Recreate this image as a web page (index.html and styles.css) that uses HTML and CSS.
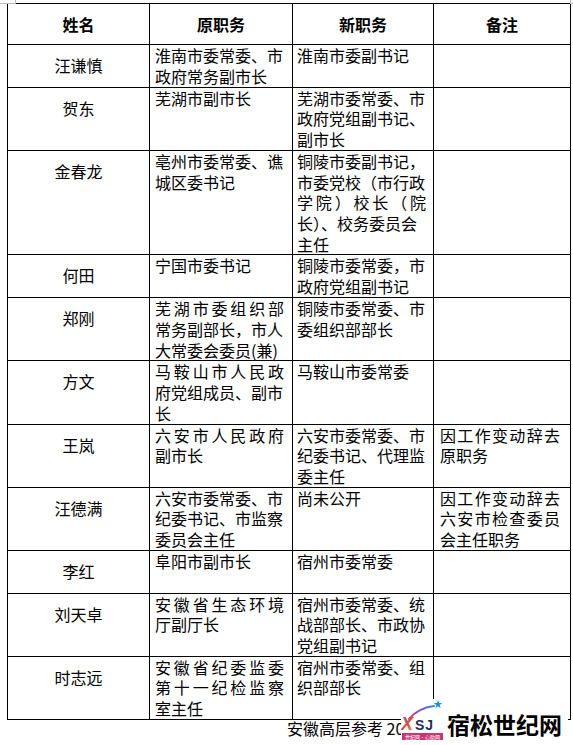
FILE: index.html
```html
<!DOCTYPE html>
<html lang="zh-CN">
<head>
<meta charset="utf-8">
<title>安徽干部调整</title>
<link rel="stylesheet" href="styles.css">
</head>
<body>
<div class="mark mark-tl"></div>
<div class="mark mark-tr"></div>
<main class="page">
  <table class="roster">
    <colgroup><col class="c1"><col class="c2"><col class="c3"><col class="c4"></colgroup>
    <thead>
      <tr><th>姓名</th><th>原职务</th><th>新职务</th><th>备注</th></tr>
    </thead>
    <tbody>
      <tr>
        <td class="name">汪谦慎</td>
        <td class="old"><span class="ln">淮南市委常委、市</span><span class="ln">政府常务副市长</span></td>
        <td class="new"><span class="ln">淮南市委副书记</span></td>
        <td class="note"></td>
      </tr>
      <tr>
        <td class="name">贺东</td>
        <td class="old"><span class="ln">芜湖市副市长</span></td>
        <td class="new"><span class="ln">芜湖市委常委、市</span><span class="ln">政府党组副书记、</span><span class="ln">副市长</span></td>
        <td class="note"></td>
      </tr>
      <tr>
        <td class="name">金春龙</td>
        <td class="old"><span class="ln">亳州市委常委、谯</span><span class="ln">城区委书记</span></td>
        <td class="new"><span class="ln">铜陵市委副书记，</span><span class="ln">市委党校（市行政</span><span class="ln sp">学院）校长（院</span><span class="ln">长）、校务委员会</span><span class="ln">主任</span></td>
        <td class="note"></td>
      </tr>
      <tr>
        <td class="name">何田</td>
        <td class="old"><span class="ln">宁国市委书记</span></td>
        <td class="new"><span class="ln">铜陵市委常委，市</span><span class="ln">政府党组副书记</span></td>
        <td class="note"></td>
      </tr>
      <tr>
        <td class="name">郑刚</td>
        <td class="old"><span class="ln sp">芜湖市委组织部</span><span class="ln">常务副部长，市人</span><span class="ln">大常委会委员(兼)</span></td>
        <td class="new"><span class="ln">铜陵市委常委、市</span><span class="ln">委组织部部长</span></td>
        <td class="note"></td>
      </tr>
      <tr>
        <td class="name">方文</td>
        <td class="old"><span class="ln sp">马鞍山市人民政</span><span class="ln">府党组成员、副市</span><span class="ln">长</span></td>
        <td class="new"><span class="ln">马鞍山市委常委</span></td>
        <td class="note"></td>
      </tr>
      <tr>
        <td class="name">王岚</td>
        <td class="old"><span class="ln sp">六安市人民政府</span><span class="ln">副市长</span></td>
        <td class="new"><span class="ln">六安市委常委、市</span><span class="ln">纪委书记、代理监</span><span class="ln">委主任</span></td>
        <td class="note"><span class="ln sp">因工作变动辞去</span><span class="ln">原职务</span></td>
      </tr>
      <tr>
        <td class="name">汪德满</td>
        <td class="old"><span class="ln">六安市委常委、市</span><span class="ln">纪委书记、市监察</span><span class="ln">委员会主任</span></td>
        <td class="new"><span class="ln">尚未公开</span></td>
        <td class="note"><span class="ln sp">因工作变动辞去</span><span class="ln sp">六安市检查委员</span><span class="ln">会主任职务</span></td>
      </tr>
      <tr>
        <td class="name">李红</td>
        <td class="old"><span class="ln">阜阳市副市长</span></td>
        <td class="new"><span class="ln">宿州市委常委</span></td>
        <td class="note"></td>
      </tr>
      <tr>
        <td class="name">刘天卓</td>
        <td class="old"><span class="ln sp">安徽省生态环境</span><span class="ln">厅副厅长</span></td>
        <td class="new"><span class="ln">宿州市委常委、统</span><span class="ln">战部部长、市政协</span><span class="ln">党组副书记</span></td>
        <td class="note"></td>
      </tr>
      <tr>
        <td class="name">时志远</td>
        <td class="old"><span class="ln sp">安徽省纪委监委</span><span class="ln sp">第十一纪检监察</span><span class="ln">室主任</span></td>
        <td class="new"><span class="ln">宿州市委常委、组</span><span class="ln">织部部长</span></td>
        <td class="note"></td>
      </tr>
    </tbody>
  </table>
  <p class="foot">安徽高层参考 20</p>
</main>
<div class="logo">
  <svg class="logo-mark" width="44" height="46" viewBox="0 0 44 46" aria-hidden="true">
    <defs>
      <linearGradient id="gx" x1="0" y1="0" x2="1" y2="1">
        <stop offset="0" stop-color="#2a78d0"/>
        <stop offset="0.55" stop-color="#e2463a"/>
        <stop offset="1" stop-color="#f5a31c"/>
      </linearGradient>
      <linearGradient id="gs" x1="0" y1="1" x2="1" y2="0">
        <stop offset="0" stop-color="#e2463a"/>
        <stop offset="0.5" stop-color="#8b4fc6"/>
        <stop offset="1" stop-color="#2d90e2"/>
      </linearGradient>
    </defs>
    <path d="M8 20 Q17 9 33 7" fill="none" stroke="url(#gs)" stroke-width="2" stroke-linecap="round"/>
    <polygon fill="#1e90e6" points="37,1 38.06,4.04 41.28,4.11 38.71,6.06 39.65,9.14 37,7.3 34.35,9.14 35.29,6.06 32.72,4.11 35.94,4.04"/>
    <text class="lm-x" x="0" y="31" fill="url(#gx)">X</text>
    <text class="lm-sj" x="14" y="31" fill="#1f2d5a">SJ</text>
    <rect x="1" y="34" width="41" height="7" fill="#c8356f"/>
    <text class="lm-bar" x="21.5" y="39.6" fill="#fff" text-anchor="middle">世纪网·心助网</text>
  </svg>
  <span class="logo-text">宿松世纪网</span>
</div>
</body>
</html>
```
FILE: styles.css
```css
html, body {
  margin: 0;
  padding: 0;
  background: #fff;
}

body {
  position: relative;
  width: 573px;
  height: 745px;
  overflow: hidden;
  color: #000;
  font-family: "Noto Sans CJK SC", "Noto Sans", sans-serif;
}

.page {
  padding: 3px 0 0 7px;
}

.roster {
  border-collapse: collapse;
  table-layout: fixed;
  width: 563px;
  font-size: 16px;
  line-height: 20.72px;
}

.c1 { width: 142px; }
.c2 { width: 143px; }
.c3 { width: 141px; }
.c4 { width: 137px; }

.roster th,
.roster td {
  border: 1px solid #000;
  padding: 0;
  vertical-align: top;
}

.roster th {
  height: 40px;
  vertical-align: middle;
  text-align: center;
  font-weight: 700;
  font-size: 16px;
}

.roster td.name {
  text-align: center;
  padding: 10px 0 11px;
}

.roster td.old { padding: 0 8px 0 5px; }
.roster td.new { padding: 0 7px 0 4px; }
.roster td.note { padding: 0 10px 0 6px; }

.ln {
  display: block;
  height: 20.72px;
  white-space: nowrap;
}

.ln.sp {
  white-space: normal;
  text-align: justify;
  text-align-last: justify;
}

.foot {
  margin: -2px 0 0;
  padding-left: 280px;
  font-size: 16px;
  line-height: 20.72px;
}

.mark {
  position: absolute;
  top: 0;
  height: 3px;
  border-bottom: 1px solid #bdbdbd;
}

.mark-tl {
  left: 0;
  width: 15px;
  border-right: 1px solid #bdbdbd;
}

.mark-tr {
  left: 570px;
  width: 3px;
  border-left: 1px solid #bdbdbd;
}

.logo {
  position: absolute;
  left: 401px;
  top: 699px;
  width: 167px;
  height: 46px;
  background: #fff;
  display: flex;
  align-items: flex-start;
  gap: 2px;
}

.logo-mark {
  display: block;
  flex: none;
}

.lm-x {
  font-family: "Liberation Sans", sans-serif;
  font-size: 18px;
  font-weight: 700;
  font-style: italic;
}

.lm-sj {
  font-family: "Liberation Sans", sans-serif;
  font-size: 14px;
  font-weight: 700;
  letter-spacing: 1px;
}

.lm-bar {
  font-family: "Noto Sans CJK SC", sans-serif;
  font-size: 5px;
}

.logo-text {
  margin-top: 11px;
  font-size: 23px;
  line-height: 28px;
  font-weight: 700;
  white-space: nowrap;
}
```
